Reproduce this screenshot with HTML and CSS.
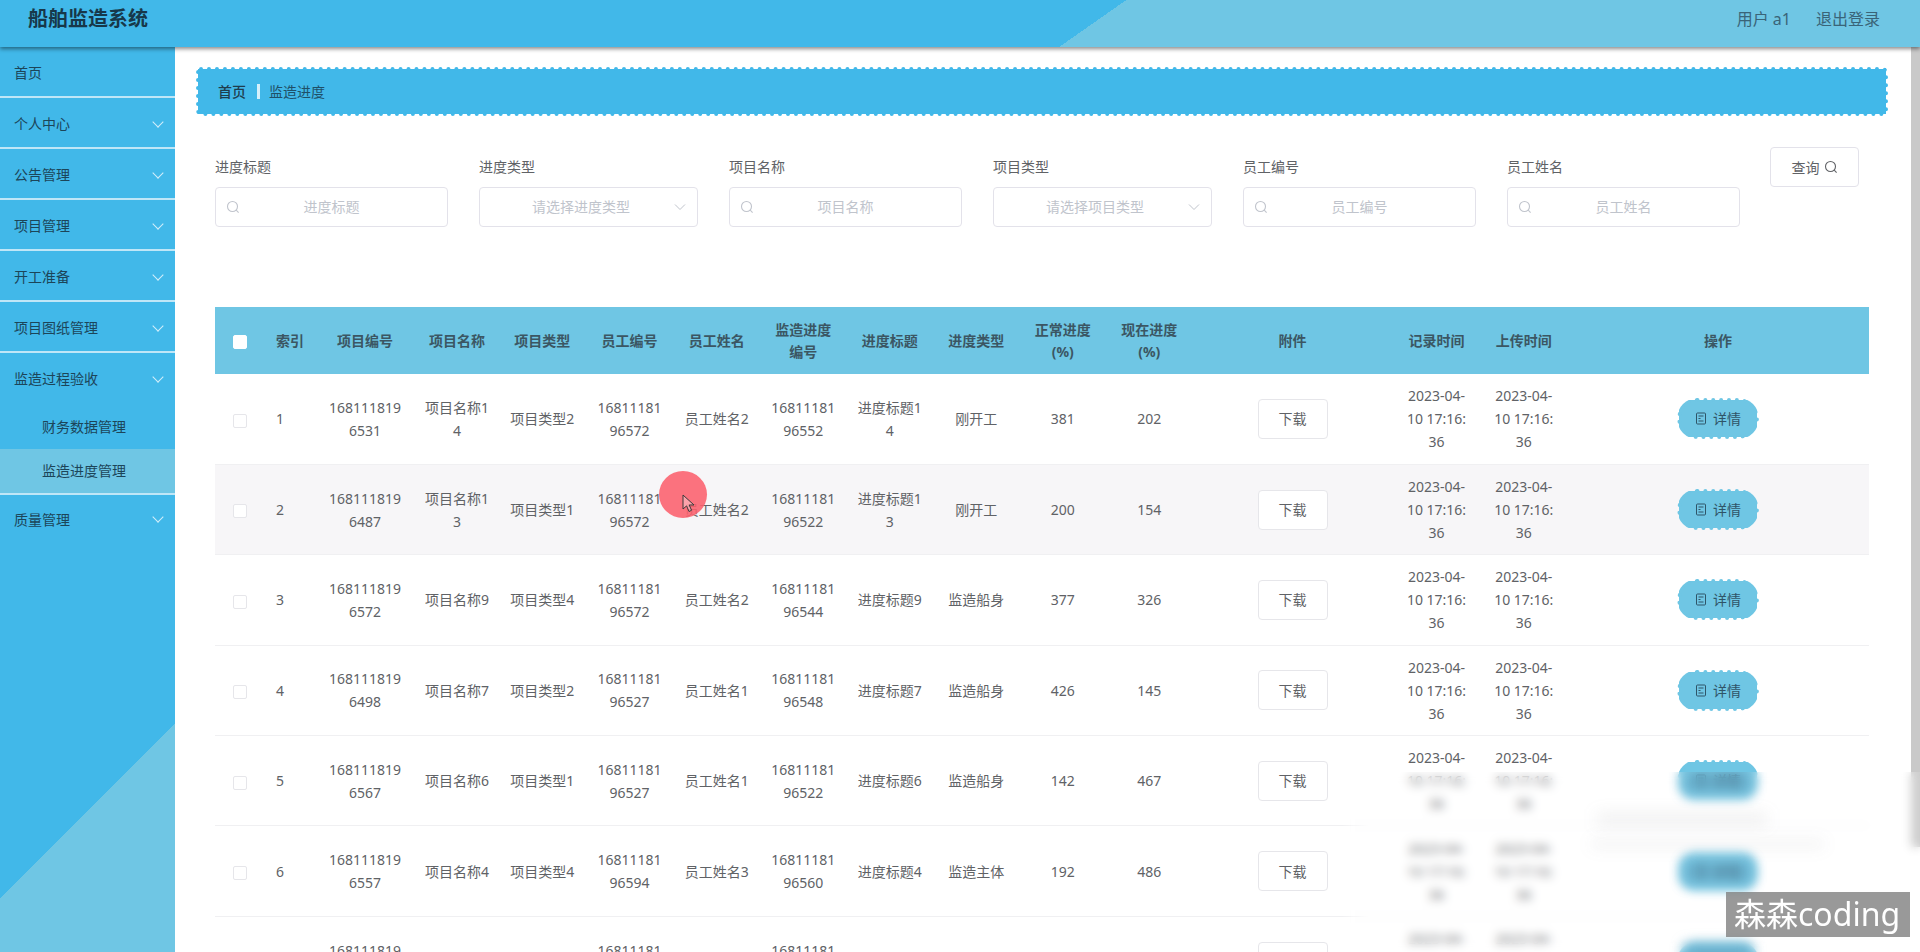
FILE: index.html
```html
<!DOCTYPE html>
<html lang="zh-CN">
<head>
    <meta charset="UTF-8">
    <title>船舶监造系统</title>
    <link rel="stylesheet" href="styles.css">
</head>
<body>
    <svg class="icon-defs" width="0" height="0">
        <symbol id="icon-search" viewBox="0 0 14 14">
            <circle cx="6.5" cy="6.5" r="5" fill="none" stroke="currentColor" stroke-width="1.1"/>
            <path d="M10.2 10.2L12.6 12.6" fill="none" stroke="currentColor" stroke-width="1.1"/>
        </symbol>
        <symbol id="icon-doc" viewBox="0 0 12 13">
            <rect x="1.5" y="1" width="9" height="11" rx="1" fill="none" stroke="currentColor" stroke-width="1"/>
            <path d="M3.5 4h5M3.5 6.5h2M3.5 9h5" fill="none" stroke="currentColor" stroke-width="1"/>
        </symbol>
        <symbol id="icon-arrow" viewBox="0 0 12 8">
            <path d="M1 1.5L6 6.5L11 1.5" fill="none" stroke="currentColor" stroke-width="1"/>
        </symbol>
    </svg>

    <header class="topbar">
        <div class="logo">船舶监造系统</div>
        <div class="user-links">
            <span>用户 a1</span>
            <span>退出登录</span>
        </div>
    </header>

    <div class="layout">
        <aside class="sidebar">
            <div class="menu-item">首页</div>
            <div class="menu-item has-sub">个人中心</div>
            <div class="menu-item has-sub">公告管理</div>
            <div class="menu-item has-sub">项目管理</div>
            <div class="menu-item has-sub">开工准备</div>
            <div class="menu-item has-sub">项目图纸管理</div>
            <div class="menu-group">
                <div class="menu-item has-sub open">监造过程验收</div>
                <div class="submenu-item">财务数据管理</div>
                <div class="submenu-item active">监造进度管理</div>
            </div>
            <div class="menu-item has-sub last">质量管理</div>
        </aside>

        <main class="main">
            <div class="content">
                <nav class="breadcrumb">
                    <span class="crumb-home">首页</span>
                    <span class="crumb-sep"></span>
                    <span class="crumb-current">监造进度</span>
                </nav>

                <form class="search-form">
                    <div class="field">
                        <label>进度标题</label>
                        <div class="input-box">
                            <svg class="search-icon"><use href="#icon-search"/></svg>
                            <span class="placeholder">进度标题</span>
                        </div>
                    </div>
                    <div class="field field-select">
                        <label>进度类型</label>
                        <div class="input-box select-box">
                            <span class="placeholder">请选择进度类型</span>
                            <svg class="select-arrow"><use href="#icon-arrow"/></svg>
                        </div>
                    </div>
                    <div class="field">
                        <label>项目名称</label>
                        <div class="input-box">
                            <svg class="search-icon"><use href="#icon-search"/></svg>
                            <span class="placeholder">项目名称</span>
                        </div>
                    </div>
                    <div class="field field-select">
                        <label>项目类型</label>
                        <div class="input-box select-box">
                            <span class="placeholder">请选择项目类型</span>
                            <svg class="select-arrow"><use href="#icon-arrow"/></svg>
                        </div>
                    </div>
                    <div class="field">
                        <label>员工编号</label>
                        <div class="input-box">
                            <svg class="search-icon"><use href="#icon-search"/></svg>
                            <span class="placeholder">员工编号</span>
                        </div>
                    </div>
                    <div class="field">
                        <label>员工姓名</label>
                        <div class="input-box">
                            <svg class="search-icon"><use href="#icon-search"/></svg>
                            <span class="placeholder">员工姓名</span>
                        </div>
                    </div>
                    <button type="button" class="query-btn">查询 <svg class="query-icon"><use href="#icon-search"/></svg></button>
                </form>

                <table class="data-table">
                    <colgroup>
                        <col class="col-check"><col class="col-index"><col class="col-no"><col class="col-name">
                        <col class="col-std"><col class="col-std2"><col class="col-std"><col class="col-std">
                        <col class="col-std"><col class="col-std"><col class="col-std"><col class="col-std">
                        <col class="col-file"><col class="col-std2"><col class="col-std"><col class="col-action">
                    </colgroup>
                    <thead>
                        <tr>
                            <th><span class="checkbox head-check"></span></th>
                            <th class="left">索引</th>
                            <th>项目编号</th>
                            <th>项目名称</th>
                            <th>项目类型</th>
                            <th>员工编号</th>
                            <th>员工姓名</th>
                            <th>监造进度<br>编号</th>
                            <th>进度标题</th>
                            <th>进度类型</th>
                            <th>正常进度<br>(%)</th>
                            <th>现在进度<br>(%)</th>
                            <th>附件</th>
                            <th>记录时间</th>
                            <th>上传时间</th>
                            <th>操作</th>
                        </tr>
                    </thead>
                    <tbody>
                        <tr>
                            <td><span class="checkbox"></span></td>
                            <td class="left">1</td>
                            <td>168111819<br>6531</td>
                            <td>项目名称1<br>4</td>
                            <td>项目类型2</td>
                            <td>16811181<br>96572</td>
                            <td>员工姓名2</td>
                            <td>16811181<br>96552</td>
                            <td>进度标题1<br>4</td>
                            <td>刚开工</td>
                            <td>381</td>
                            <td>202</td>
                            <td><button type="button" class="download-btn">下载</button></td>
                            <td>2023-04-<br>10 17:16:<br>36</td>
                            <td>2023-04-<br>10 17:16:<br>36</td>
                            <td><button type="button" class="detail-btn"><svg class="doc-icon"><use href="#icon-doc"/></svg>详情</button></td>
                        </tr>
                        <tr class="hovered">
                            <td><span class="checkbox"></span></td>
                            <td class="left">2</td>
                            <td>168111819<br>6487</td>
                            <td>项目名称1<br>3</td>
                            <td>项目类型1</td>
                            <td>16811181<br>96572</td>
                            <td>员工姓名2</td>
                            <td>16811181<br>96522</td>
                            <td>进度标题1<br>3</td>
                            <td>刚开工</td>
                            <td>200</td>
                            <td>154</td>
                            <td><button type="button" class="download-btn">下载</button></td>
                            <td>2023-04-<br>10 17:16:<br>36</td>
                            <td>2023-04-<br>10 17:16:<br>36</td>
                            <td><button type="button" class="detail-btn"><svg class="doc-icon"><use href="#icon-doc"/></svg>详情</button></td>
                        </tr>
                        <tr>
                            <td><span class="checkbox"></span></td>
                            <td class="left">3</td>
                            <td>168111819<br>6572</td>
                            <td>项目名称9</td>
                            <td>项目类型4</td>
                            <td>16811181<br>96572</td>
                            <td>员工姓名2</td>
                            <td>16811181<br>96544</td>
                            <td>进度标题9</td>
                            <td>监造船身</td>
                            <td>377</td>
                            <td>326</td>
                            <td><button type="button" class="download-btn">下载</button></td>
                            <td>2023-04-<br>10 17:16:<br>36</td>
                            <td>2023-04-<br>10 17:16:<br>36</td>
                            <td><button type="button" class="detail-btn"><svg class="doc-icon"><use href="#icon-doc"/></svg>详情</button></td>
                        </tr>
                        <tr>
                            <td><span class="checkbox"></span></td>
                            <td class="left">4</td>
                            <td>168111819<br>6498</td>
                            <td>项目名称7</td>
                            <td>项目类型2</td>
                            <td>16811181<br>96527</td>
                            <td>员工姓名1</td>
                            <td>16811181<br>96548</td>
                            <td>进度标题7</td>
                            <td>监造船身</td>
                            <td>426</td>
                            <td>145</td>
                            <td><button type="button" class="download-btn">下载</button></td>
                            <td>2023-04-<br>10 17:16:<br>36</td>
                            <td>2023-04-<br>10 17:16:<br>36</td>
                            <td><button type="button" class="detail-btn"><svg class="doc-icon"><use href="#icon-doc"/></svg>详情</button></td>
                        </tr>
                        <tr>
                            <td><span class="checkbox"></span></td>
                            <td class="left">5</td>
                            <td>168111819<br>6567</td>
                            <td>项目名称6</td>
                            <td>项目类型1</td>
                            <td>16811181<br>96527</td>
                            <td>员工姓名1</td>
                            <td>16811181<br>96522</td>
                            <td>进度标题6</td>
                            <td>监造船身</td>
                            <td>142</td>
                            <td>467</td>
                            <td><button type="button" class="download-btn">下载</button></td>
                            <td>2023-04-<br>10 17:16:<br>36</td>
                            <td>2023-04-<br>10 17:16:<br>36</td>
                            <td><button type="button" class="detail-btn"><svg class="doc-icon"><use href="#icon-doc"/></svg>详情</button></td>
                        </tr>
                        <tr>
                            <td><span class="checkbox"></span></td>
                            <td class="left">6</td>
                            <td>168111819<br>6557</td>
                            <td>项目名称4</td>
                            <td>项目类型4</td>
                            <td>16811181<br>96594</td>
                            <td>员工姓名3</td>
                            <td>16811181<br>96560</td>
                            <td>进度标题4</td>
                            <td>监造主体</td>
                            <td>192</td>
                            <td>486</td>
                            <td><button type="button" class="download-btn">下载</button></td>
                            <td>2023-04-<br>10 17:16:<br>36</td>
                            <td>2023-04-<br>10 17:16:<br>36</td>
                            <td><button type="button" class="detail-btn"><svg class="doc-icon"><use href="#icon-doc"/></svg>详情</button></td>
                        </tr>
                        <tr>
                            <td><span class="checkbox"></span></td>
                            <td class="left">7</td>
                            <td>168111819<br>6510</td>
                            <td>项目名称3</td>
                            <td>项目类型3</td>
                            <td>16811181<br>96594</td>
                            <td>员工姓名3</td>
                            <td>16811181<br>96533</td>
                            <td>进度标题3</td>
                            <td>监造主体</td>
                            <td>210</td>
                            <td>305</td>
                            <td><button type="button" class="download-btn">下载</button></td>
                            <td>2023-04-<br>10 17:16:<br>36</td>
                            <td>2023-04-<br>10 17:16:<br>36</td>
                            <td><button type="button" class="detail-btn"><svg class="doc-icon"><use href="#icon-doc"/></svg>详情</button></td>
                        </tr>
                    </tbody>
                </table>
            </div>
            <div class="scroll-track"><div class="scroll-thumb"></div></div>
        </main>
    </div>

    <!-- screen recording overlays -->
    <div class="cursor-halo"></div>
    <svg class="cursor-arrow" viewBox="0 0 13 19">
        <path d="M1 1L1 15L4.6 11.9L7 17.5L9.6 16.3L7.2 11L12 11Z" fill="rgba(255,255,255,0.35)" stroke="#3a3a3a" stroke-width="1"/>
    </svg>
    <div class="blur-patch">
        <div class="blur-line line-a"></div>
        <div class="blur-line line-b"></div>
        <div class="blur-btn btn-a"></div>
        <div class="blur-btn btn-b"></div>
        <div class="blur-btn btn-c"></div>
    </div>
    <div class="watermark">森森coding</div>
</body>
</html>
```

FILE: styles.css
```css
:root {
    --blue: #41b8e9;
    --light-blue: #6fc6e4;
    --menu-text: #1c4559;
    --text: #606266;
    --head-text: #3b5663;
}

* {
    box-sizing: border-box;
}

html, body {
    height: 100%;
}

body {
    margin: 0;
    overflow: hidden;
    font-family: "Noto Sans", "Noto Sans CJK SC", sans-serif;
    font-size: 14px;
    color: var(--text);
    background: #fff;
}

.icon-defs {
    position: absolute;
}

/* top bar */
.topbar {
    position: relative;
    z-index: 2;
    height: 47px;
    display: flex;
    align-items: center;
    justify-content: space-between;
    padding: 0 40px 12px 28px;
    background: linear-gradient(145deg, var(--blue) 646px, var(--light-blue) 646px);
    box-shadow: 0 2px 4px rgba(0, 0, 0, 0.45);
}

.logo {
    font-size: 20px;
    font-weight: 700;
    color: #17384a;
}

.user-links {
    display: flex;
    gap: 25px;
    font-size: 16px;
    color: #3a6478;
}

.layout {
    display: flex;
    height: 905px;
}

/* side menu */
.sidebar {
    flex: 0 0 175px;
    background: linear-gradient(135deg, var(--blue) 602px, var(--light-blue) 602px);
}

.menu-item {
    position: relative;
    height: 51px;
    padding-left: 14px;
    line-height: 52px;
    color: var(--menu-text);
    border-bottom: 2px solid #bfe6f7;
}

.menu-item.has-sub::after {
    content: "";
    position: absolute;
    right: 13px;
    top: 20px;
    width: 7px;
    height: 7px;
    border-right: 1px solid #d3eefa;
    border-bottom: 1px solid #d3eefa;
    transform: rotate(45deg);
}

.menu-group {
    border-bottom: 2px solid #bfe6f7;
}

.menu-item.open {
    height: 52px;
    border-bottom: none;
}

.menu-item.last {
    line-height: 49px;
    border-bottom: none;
}

.menu-item.last::after {
    top: 18px;
}

.submenu-item {
    height: 44px;
    padding-left: 42px;
    line-height: 44px;
    color: var(--menu-text);
}

.submenu-item.active {
    background: var(--light-blue);
}

/* page body */
.main {
    flex: 1;
    display: flex;
    min-width: 0;
}

.content {
    flex: 1;
    min-width: 0;
    padding: 20px 23px 0 21px;
}

.scroll-track {
    flex: 0 0 9px;
    background: #fff;
}

.scroll-thumb {
    height: 800px;
    background: #c9c9c9;
}

/* the dots stick out 2px round the filled part, so they read as bumps */
.breadcrumb {
    height: 49px;
    display: flex;
    align-items: center;
    padding: 0 0 1px 18px;
    border: 4px dotted var(--blue);
    border-radius: 5px;
    background: linear-gradient(var(--blue), var(--blue)) center / calc(100% - 4px) calc(100% - 4px) no-repeat;
    background-origin: border-box;
    background-clip: border-box;
}

.crumb-home {
    font-weight: 500;
    color: #1f3d4e;
}

.crumb-sep {
    width: 3px;
    height: 15px;
    margin: 0 9px 0 11px;
    background: #d5f0fb;
}

.crumb-current {
    color: #1f5068;
}

/* search form */
.search-form {
    display: flex;
    gap: 31px;
    margin: 31px 0 80px 19px;
}

.field {
    width: 233px;
}

.field-select {
    width: 219px;
}

.field label {
    display: block;
    height: 40px;
    line-height: 40px;
    color: #606266;
}

.input-box {
    position: relative;
    height: 40px;
    display: flex;
    align-items: center;
    justify-content: center;
    padding-bottom: 2px;
    border: 1px solid #e3e2ea;
    border-radius: 4px;
    background: #fff;
}

.select-box {
    justify-content: flex-start;
    padding: 0 30px 2px 15px;
}

.select-box .placeholder {
    flex: 1;
    text-align: center;
}

.placeholder {
    color: #c0c4cc;
}

.search-icon {
    position: absolute;
    left: 10px;
    top: 12px;
    width: 14px;
    height: 14px;
    color: #c0c4cc;
}

.select-arrow {
    position: absolute;
    right: 11px;
    top: 15px;
    width: 12px;
    height: 8px;
    color: #c0c4cc;
}

.query-btn {
    width: 89px;
    height: 40px;
    margin-left: -1px;
    padding: 0;
    border: 1px solid #e3e2ea;
    border-radius: 4px;
    background: #fff;
    font: inherit;
    color: #606266;
    display: flex;
    align-items: center;
    justify-content: center;
    gap: 4px;
}

.query-icon {
    width: 14px;
    height: 14px;
    color: #606266;
}

/* table */
.data-table {
    width: 1653px;
    margin-left: 19px;
    border-collapse: collapse;
    table-layout: fixed;
    line-height: 23px;
}

.col-check, .col-index { width: 50px; }
.col-no { width: 100px; }
.col-name { width: 84px; }
.col-std { width: 86.5px; }
.col-std2 { width: 88px; }
.col-file { width: 200px; }
.col-action { width: 302px; }

.data-table th {
    height: 67px;
    padding: 0;
    font-weight: 700;
    line-height: 22px;
    color: var(--head-text);
    background: var(--light-blue);
    text-align: center;
}

.data-table td {
    height: 90.4px;
    padding: 0;
    text-align: center;
    border-bottom: 1px solid #f0f0f2;
    white-space: nowrap;
}

.data-table th.left,
.data-table td.left {
    text-align: left;
    padding-left: 11px;
}

.hovered td {
    background: #f7f6f8;
}

.checkbox {
    display: inline-block;
    width: 14px;
    height: 14px;
    vertical-align: middle;
    border: 1px solid #e6e6ea;
    border-radius: 2px;
    background: #fff;
}

.head-check {
    border-color: #fff;
}

.download-btn {
    width: 70px;
    height: 40px;
    padding: 0;
    border: 1px solid #e6e6ea;
    border-radius: 4px;
    background: #fff;
    font: inherit;
    color: var(--text);
    vertical-align: middle;
}

.detail-btn {
    width: 82px;
    height: 41px;
    padding: 0;
    border: 4px dotted var(--light-blue);
    border-radius: 21px;
    background: linear-gradient(var(--light-blue), var(--light-blue)) center / calc(100% - 4px) calc(100% - 4px) no-repeat;
    background-origin: border-box;
    background-clip: border-box;
    font: inherit;
    color: #2f5568;
    vertical-align: middle;
    display: inline-flex;
    align-items: center;
    justify-content: center;
    gap: 6px;
}

.doc-icon {
    width: 12px;
    height: 13px;
    color: #2f5568;
}

/* things the screen recording put on top of the page */
.cursor-halo {
    position: absolute;
    left: 659px;
    top: 471px;
    width: 48px;
    height: 47px;
    border-radius: 50%;
    background: rgba(252, 96, 108, 0.88);
}

.cursor-arrow {
    position: absolute;
    left: 682px;
    top: 494px;
    width: 13px;
    height: 19px;
}

.blur-patch {
    position: absolute;
    left: 1340px;
    right: 0;
    top: 772px;
    bottom: 0;
    background: rgba(253, 252, 253, 0.1);
    backdrop-filter: blur(5px);
    -webkit-mask-image: linear-gradient(to right, transparent, #000 30px);
    mask-image: linear-gradient(to right, transparent, #000 30px);
}

.blur-line {
    position: absolute;
    height: 10px;
    background: rgba(120, 120, 125, 0.14);
    filter: blur(8px);
}

.line-a {
    left: 257px;
    top: 42px;
    width: 170px;
}

.line-b {
    left: 250px;
    top: 67px;
    width: 235px;
    opacity: 0.6;
}

.blur-btn {
    position: absolute;
    left: 345px;
    width: 66px;
    height: 22px;
    background: rgba(85, 150, 180, 0.55);
    filter: blur(7px);
}

.btn-a { top: -1px; }
.btn-b { top: 89px; }
.btn-c { top: 172px; }

.watermark {
    position: absolute;
    left: 1726px;
    top: 892px;
    width: 184px;
    height: 45px;
    padding-left: 8px;
    line-height: 43px;
    font-size: 32px;
    color: #fff;
    background: rgba(128, 128, 128, 0.8);
    white-space: nowrap;
    overflow: hidden;
}
```
